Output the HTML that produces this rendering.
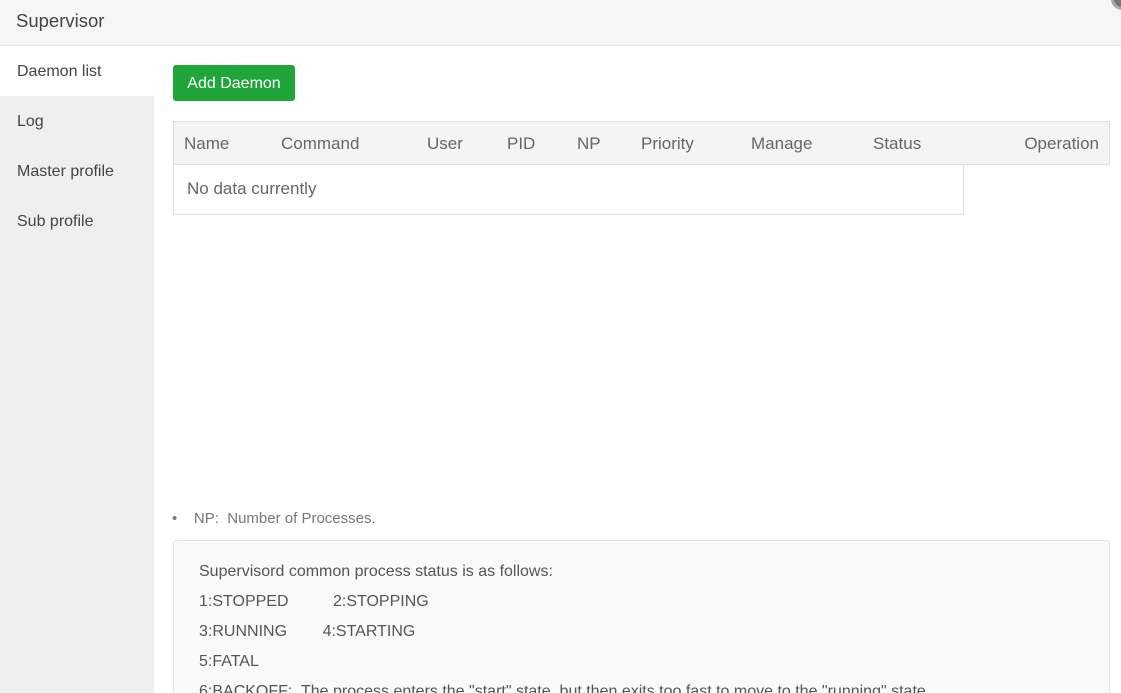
<!DOCTYPE html>
<html><head><style>
*{margin:0;padding:0;box-sizing:border-box}
html,body{width:1121px;height:693px;overflow:hidden}
body{background:#fff;font-family:"Liberation Sans",sans-serif;color:#555;position:relative}
.hd{position:absolute;left:0;top:0;width:1121px;height:46px;background:#f6f6f6;border-bottom:1px solid #e6e6e6}
.hd span{position:absolute;left:16px;top:10px;font-size:18.5px;color:#444}
.dot{position:absolute;left:1111px;top:-12px;width:22px;height:22px;border-radius:50%;background:#777;border:3px solid #aaa}
.sb{position:absolute;left:0;top:46px;width:154px;height:647px;background:#efefef}
.sb div{height:50px;line-height:52px;padding-left:17px;font-size:16px;color:#444}
.sb .a{background:#fff}
.btn{position:absolute;left:173px;top:65px;width:122px;height:36px;background:#20a53a;border-radius:3px;color:#fff;font-size:16px;line-height:38px;text-align:center}
.th{position:absolute;left:173px;top:121px;width:937px;height:44px;background:#f4f4f4;border:1px solid #e0e0e0;border-bottom:1px solid #ddd}
.th span{position:absolute;top:12px;font-size:17px;color:#666}
.tb{position:absolute;left:173px;top:164px;width:791px;height:51px;border:1px solid #e0e0e0;border-top:none}
.tb span{position:absolute;left:13px;top:15px;font-size:17px;color:#666}
.np{position:absolute;left:172px;top:510px;font-size:15px;color:#777;white-space:pre}
.box{position:absolute;left:173px;top:540px;width:937px;height:153px;background:#fafafa;border:1px solid #e5e5e5;border-bottom:none;border-radius:4px 4px 0 0;overflow:hidden}
.box p{position:absolute;left:25px;font-size:16px;color:#555;white-space:pre}
</style></head><body>
<div class="hd"><span>Supervisor</span></div>
<div class="dot"></div>
<div class="sb"><div class="a">Daemon list</div><div>Log</div><div>Master profile</div><div>Sub profile</div></div>
<div class="btn">Add Daemon</div>
<div class="th">
<span style="left:10px">Name</span><span style="left:107px">Command</span><span style="left:253px">User</span><span style="left:333px">PID</span><span style="left:403px">NP</span><span style="left:467px">Priority</span><span style="left:577px">Manage</span><span style="left:699px">Status</span><span style="right:10px">Operation</span>
</div>
<div class="tb"><span>No data currently</span></div>
<div class="np">•    NP:  Number of Processes.</div>
<div class="box">
<p style="top:22px">Supervisord common process status is as follows:</p>
<p style="top:52px">1:STOPPED          2:STOPPING</p>
<p style="top:82px">3:RUNNING        4:STARTING</p>
<p style="top:112px">5:FATAL</p>
<p style="top:142px">6:BACKOFF:&nbsp; The process enters the "start" state, but then exits too fast to move to the "running" state.</p>
</div>
</body></html>
